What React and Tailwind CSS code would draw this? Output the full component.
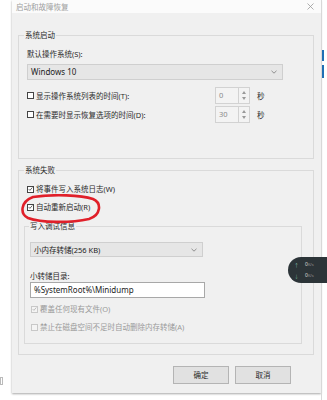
import React from 'react';

const font = { fontFamily: '"Noto Sans", "Noto Sans CJK SC", sans-serif' };

function Box({ checked, disabled }) {
  return (
    <span className={`w-[7px] h-[7px] shrink-0 border flex items-center justify-center ${disabled ? 'border-[#c8c8c8] bg-[#f4f4f4]' : 'border-[#444] bg-white'}`}>
      {checked && (
        <svg width="6" height="6" viewBox="0 0 6 6">
          <path d="M0.8 3.1 L2.3 4.6 L5.2 1.2" fill="none" stroke={disabled ? '#aaa' : '#333'} strokeWidth="0.9" />
        </svg>
      )}
    </span>
  );
}

function Check({ label, checked, disabled, className = '' }) {
  return (
    <div className={`flex items-center gap-[2px] h-[12px] ${className}`}>
      <Box checked={checked} disabled={disabled} />
      <span className={`leading-[12px] whitespace-nowrap ${disabled ? 'text-[#9a9a9a]' : 'text-[#2a2a2a]'}`}>{label}</span>
    </div>
  );
}

function Chevron() {
  return (
    <svg width="6" height="4" viewBox="0 0 6 4">
      <path d="M0.5 0.8 L3 3.2 L5.5 0.8" fill="none" stroke="#777" strokeWidth="0.8" />
    </svg>
  );
}

function Spin({ value }) {
  return (
    <div className="flex h-[17px]">
      <div className="w-[24px] h-full border border-[#d2d2d2] bg-[#f3f3f3] text-[#8a8a8a] pl-[3px] leading-[15px]">{value}</div>
      <div className="w-[11px] h-full border border-l-0 border-[#d2d2d2] bg-[#f3f3f3] flex flex-col items-center justify-center gap-[3px]">
        <svg width="4" height="3" viewBox="0 0 4 3"><path d="M0 3 L2 0 L4 3 Z" fill="#999" /></svg>
        <svg width="4" height="3" viewBox="0 0 4 3"><path d="M0 0 L2 3 L4 0 Z" fill="#999" /></svg>
      </div>
    </div>
  );
}

function TimeRow({ label, value, className = '' }) {
  return (
    <div className={`flex items-center h-[17px] ${className}`}>
      <div className="w-[188px] flex items-center gap-[2px]">
        <Box />
        <span className="text-[#2a2a2a] whitespace-nowrap">{label}</span>
      </div>
      <Spin value={value} />
      <span className="ml-[7px] text-[#2a2a2a]">秒</span>
    </div>
  );
}

export default function App() {
  return (
    <div className="w-[327px] h-[400px] bg-white relative overflow-hidden text-[7.5px] leading-[10px]" style={font}>
      {/* desktop behind the dialog */}
      <div className="absolute left-[321px] top-0 w-px h-[400px] bg-[#d8d8d8]" />
      <div className="absolute left-[322px] top-[50px] w-[2px] h-[11px] bg-[#1f6fb5]" />
      <div className="absolute left-[322px] top-[65px] w-[2px] h-[13px] bg-[#1f6fb5]" />
      <div className="absolute left-0 top-[377px] w-[3px] h-[8px] border border-[#bbb]" />

      <div className="ml-[12px] w-[309px] h-[393px] bg-[#f0f0f0] flex flex-col shadow-[0_1px_2px_rgba(0,0,0,0.35)]">
        <div className="h-[13px] bg-[#fbfbfb] flex items-center justify-between pl-[4px] pr-[7px] text-[#a0a0a0]">
          <span className="leading-[10px]">启动和故障恢复</span>
          <svg width="7" height="7" viewBox="0 0 7 7">
            <path d="M0.5 0.5 L6.5 6.5 M6.5 0.5 L0.5 6.5" stroke="#9a9a9a" strokeWidth="0.8" />
          </svg>
        </div>

        <div className="px-[6px]">
          <fieldset className="mt-[17px] w-[296px] h-[129px] border border-[#dadada] px-[8px]">
            <legend className="px-[1px] -ml-[3px] leading-[10px] text-[#2a2a2a]">系统启动</legend>
            <div className="mt-[9px] text-[#2a2a2a]">默认操作系统(S):</div>
            <div className="mt-[5px] w-[256px] h-[16px] bg-[#e6e6e6] border border-[#cfcfcf] flex items-center justify-between pl-[3px] pr-[5px]">
              <span className="text-[#222] text-[8px]">Windows 10</span>
              <Chevron />
            </div>
            <TimeRow className="mt-[7px]" label="显示操作系统列表的时间(T):" value="0" />
            <TimeRow className="mt-[2px]" label="在需要时显示恢复选项的时间(D):" value="30" />
          </fieldset>

          <fieldset className="mt-[6px] w-[296px] h-[190px] border border-[#dadada] px-[5px]">
            <legend className="px-[1px] leading-[10px] text-[#2a2a2a]">系统失败</legend>
            <Check className="mt-[8px] ml-[3px]" label="将事件写入系统日志(W)" checked />
            <Check className="mt-[6px] ml-[3px]" label="自动重新启动(R)" checked />

            <fieldset className="mt-[8px] w-[278px] h-[123px] border border-[#dadada] px-[5px]">
              <legend className="px-[1px] -ml-[1px] leading-[10px] text-[#2a2a2a]">写入调试信息</legend>
              <div className="mt-[11px] w-[173px] h-[15px] bg-[#e6e6e6] border border-[#cfcfcf] flex items-center justify-between pl-[3px] pr-[5px]">
                <span className="text-[#222]">小内存转储(256 KB)</span>
                <Chevron />
              </div>
              <div className="mt-[14px] text-[#2a2a2a]">小转储目录:</div>
              <div className="mt-[1px] w-[175px] h-[16px] bg-white border border-[#a8a8a8] pl-[3px] leading-[14px] text-[#222] text-[8px]">%SystemRoot%\Minidump</div>
              <Check className="mt-[5px] ml-[1px]" label="覆盖任何现有文件(O)" checked disabled />
              <Check className="mt-[6px] ml-[1px]" label="禁止在磁盘空间不足时自动删除内存转储(A)" disabled />
            </fieldset>
          </fieldset>
        </div>

        <div className="mt-[11px] flex justify-end gap-[6px] pr-[30px]">
          <button className="w-[56px] h-[18px] bg-[#e1e1e1] border border-[#b4b4b4] text-[#2a2a2a] leading-[16px]">确定</button>
          <button className="w-[56px] h-[18px] bg-[#e1e1e1] border border-[#b4b4b4] text-[#2a2a2a] leading-[16px]">取消</button>
        </div>
      </div>

      {/* hand-drawn red annotation */}
      <svg className="absolute left-[19px] top-[194px]" width="84" height="30" viewBox="0 0 84 30">
        <path d="M14 3 C35 0 62 1 74 5 C83 9 82 21 70 25 C52 29 22 29 9 24 C1 20 1 8 14 3 Z" fill="none" stroke="#e0202a" strokeWidth="2.6" />
      </svg>

      {/* network speed widget */}
      <div className="absolute left-[288px] top-[257px] w-[45px] h-[26px] rounded-l-[13px] bg-[#2c3438] flex flex-col justify-center gap-[2px] pl-[6px]">
        <div className="flex items-center gap-[6px] leading-[8px]">
          <span className="text-[5px] text-[#7fb6a8]">↑</span>
          <span className="text-[5px] text-[#ddd]">0<span className="text-[4px] text-[#999]">K/s</span></span>
        </div>
        <div className="flex items-center gap-[6px] leading-[8px]">
          <span className="text-[5px] text-[#6ca58f]">↓</span>
          <span className="text-[5px] text-[#ddd]">0<span className="text-[4px] text-[#999]">K/s</span></span>
        </div>
      </div>
    </div>
  );
}
